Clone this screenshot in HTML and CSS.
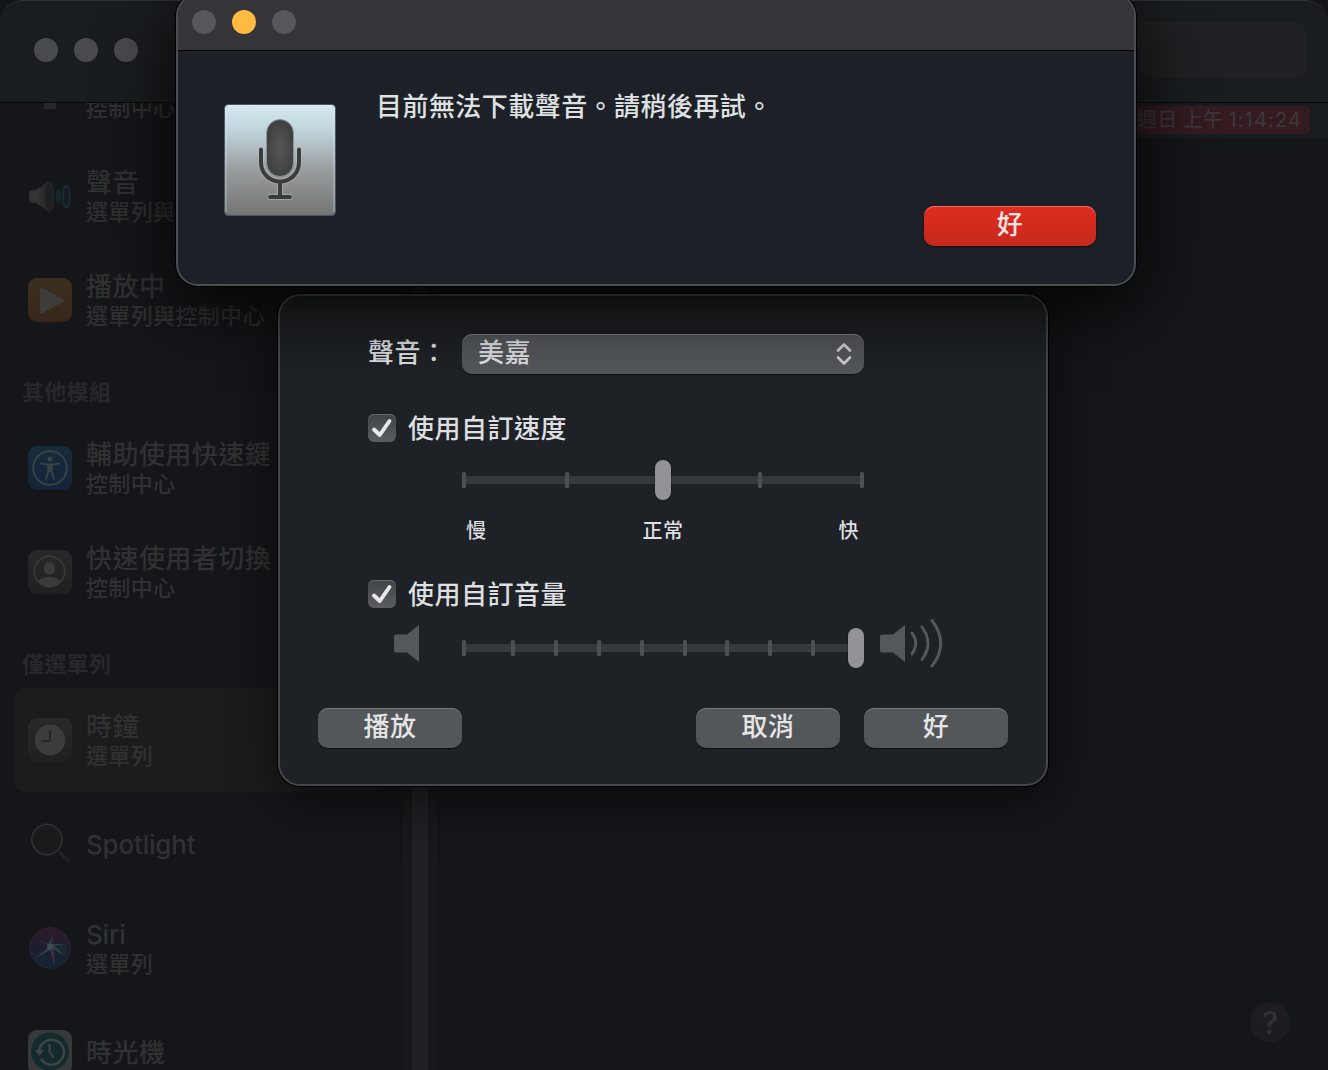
FILE: index.html
```html
<!DOCTYPE html>
<html lang="zh-Hant">
<head>
<meta charset="utf-8">
<title>系統偏好設定</title>
<link rel="stylesheet" href="styles.css">
</head>
<body>
<div class="desktop">
  <div class="prefs">
    <header class="toolbar">
      <div class="lights"><i></i><i></i><i></i></div>
      <div class="search"></div>
    </header>
    <div class="panes">
      <nav class="sidebar">
        <div class="item">
          <svg class="icon" viewBox="0 0 44 44"><rect x="16" y="31" width="12" height="8" fill="#27282a"/></svg>
          <div class="label"><span class="name">&nbsp;</span><span class="sub">控制中心</span></div>
        </div>
        <div class="item">
          <svg class="icon" viewBox="0 0 44 44">
            <defs><linearGradient id="cone" x1="0" x2="1"><stop offset="0" stop-color="#333435"/><stop offset=".7" stop-color="#292a2b"/><stop offset="1" stop-color="#1d1e1f"/></linearGradient></defs>
            <rect x="1" y="16" width="9" height="13" rx="4" fill="#323334"/>
            <path d="M8 15.500Q14 13 20 7.500v30Q14 32 8 29.500z" fill="url(#cone)"/>
            <ellipse cx="21" cy="22.500" rx="4.500" ry="15" fill="#1e1f20" stroke="#2a2b2c"/>
            <ellipse cx="30.500" cy="22.500" rx="2.300" ry="7" fill="#152428" stroke="#182c31"/>
            <ellipse cx="38.300" cy="22.500" rx="3.300" ry="11" fill="#121a1d" stroke="#182c31" stroke-width="2"/>
          </svg>
          <div class="label"><span class="name">聲音</span><span class="sub">選單列與控制中心</span></div>
        </div>
        <div class="item">
          <svg class="icon" viewBox="0 0 44 44">
            <defs><linearGradient id="amber" x2="0" y2="1"><stop offset="0" stop-color="#3b301c"/><stop offset="1" stop-color="#38261c"/></linearGradient></defs>
            <rect width="44" height="44" rx="9" fill="url(#amber)"/>
            <path d="M13.500 11 34.500 22.500 13.500 34z" fill="#3e3c39" stroke="#3e3c39" stroke-width="3" stroke-linejoin="round"/>
          </svg>
          <div class="label"><span class="name">播放中</span><span class="sub">選單列與控制中心</span></div>
        </div>
        <h2 class="group">其他模組</h2>
        <div class="item">
          <svg class="icon" viewBox="0 0 44 44">
            <defs><linearGradient id="azure" x2="0" y2="1"><stop offset="0" stop-color="#162b3c"/><stop offset="1" stop-color="#15243a"/></linearGradient></defs>
            <rect width="44" height="44" rx="9" fill="url(#azure)"/>
            <circle cx="22" cy="22" r="16.800" fill="none" stroke="#3b4145" stroke-width="2"/>
            <circle cx="22" cy="13" r="2.500" fill="#3b4145"/>
            <path d="M13 17.500 19.500 18.500H24.500L31 17.500M20.500 18.500V25L18 33M23.500 18.500V25L26 33" fill="none" stroke="#3b4145" stroke-width="2" stroke-linecap="round" stroke-linejoin="round"/>
            <path d="M19.500 18h5v8h-5z" fill="#3b4145"/>
          </svg>
          <div class="label"><span class="name">輔助使用快速鍵</span><span class="sub">控制中心</span></div>
        </div>
        <div class="item">
          <svg class="icon" viewBox="0 0 44 44">
            <defs><linearGradient id="slate" x2="0" y2="1"><stop offset="0" stop-color="#28292b"/><stop offset="1" stop-color="#1f2022"/></linearGradient>
            <clipPath id="disc"><circle cx="21.500" cy="21.500" r="15"/></clipPath></defs>
            <rect width="44" height="44" rx="9" fill="url(#slate)"/>
            <circle cx="21.500" cy="21.500" r="15.200" fill="none" stroke="#3a3b3d" stroke-width="1.500"/>
            <g clip-path="url(#disc)" fill="#3a3b3d"><ellipse cx="21.500" cy="18.500" rx="5.600" ry="6.200"/><ellipse cx="21.500" cy="34" rx="12" ry="7.300"/></g>
          </svg>
          <div class="label"><span class="name">快速使用者切換</span><span class="sub">控制中心</span></div>
        </div>
        <h2 class="group">僅選單列</h2>
        <div class="item selected">
          <svg class="icon" viewBox="0 0 44 44">
            <rect width="44" height="44" rx="9" fill="url(#slate)"/>
            <circle cx="22" cy="22" r="15.200" fill="#3b3c3e"/>
            <path d="M13 23h9V12" fill="none" stroke="#252628" stroke-width="2"/>
          </svg>
          <div class="label"><span class="name">時鐘</span><span class="sub">選單列</span></div>
        </div>
        <div class="item">
          <svg class="icon" viewBox="0 0 44 44">
            <path d="M31 30 41 39.500" stroke="#222325" stroke-width="2.500"/>
            <circle cx="19" cy="17.500" r="15.200" fill="#1b1c1f" stroke="#2f3032" stroke-width="1.500"/>
            <circle cx="19" cy="18.500" r="12.500" fill="#18191b"/>
          </svg>
          <div class="label"><span class="name latin">Spotlight</span></div>
        </div>
        <div class="item">
          <svg class="icon" viewBox="0 0 44 44">
            <defs><linearGradient id="orb" x1=".5" x2=".4" y2="1"><stop offset="0" stop-color="#321929"/><stop offset=".45" stop-color="#1f1c2e"/><stop offset="1" stop-color="#142536"/></linearGradient></defs>
            <circle cx="22" cy="22" r="20.300" fill="url(#orb)" stroke="#24282e"/>
            <path d="M22 20Q32 13 39 20 40 26 34 31z" fill="#17292c"/>
            <path d="M22 20 6 33 22 24 27 40 25 23 38 30 26 20 39 18 24 18 25 10 20 18 11 14z" fill="#2b4247"/>
            <path d="M22 23 27 40 25 23z" fill="#472b42"/>
            <circle cx="22" cy="20.500" r="3" fill="#434b50"/>
          </svg>
          <div class="label"><span class="name latin">Siri</span><span class="sub">選單列</span></div>
        </div>
        <div class="item">
          <svg class="icon" viewBox="0 0 44 44">
            <rect width="44" height="44" rx="9" fill="#37393a"/>
            <circle cx="22" cy="21.500" r="19" fill="#152b2b"/>
            <path d="M11 21a12.500 12.500 0 1 1 2 8" fill="none" stroke="#404547" stroke-width="2.300"/>
            <path d="M7 20h9l-4.500 6z" fill="#404547"/>
            <path d="M21.500 14v8l4.500 6" fill="none" stroke="#404547" stroke-width="2"/>
          </svg>
          <div class="label"><span class="name">時光機</span></div>
        </div>
      </nav>
      <div class="scroller"><div class="thumb"></div></div>
      <main class="content">
        <div class="preview"><div class="clock">週日 上午 <span class="time">1:14:24</span></div></div>
        <div class="help">?</div>
      </main>
    </div>
  </div>

  <section class="sheet">
    <div class="row voice">
      <span class="caption">聲音：</span>
      <div class="select"><span>美嘉</span>
        <svg width="16" height="24" viewBox="0 0 16 24" fill="none" stroke="#cfcfd0" stroke-width="2.700" stroke-linecap="round" stroke-linejoin="round"><path d="M2 8.500 8 2.500 14 8.500M2 15.500 8 21.500 14 15.500"/></svg>
      </div>
    </div>
    <div class="row check rate"><span class="box"><svg width="28" height="28" viewBox="0 0 28 28"><path d="M6 15.500 11.800 21 21.500 7" fill="none" stroke="#e9e9ea" stroke-width="3.900" stroke-linecap="round" stroke-linejoin="round"/></svg></span><span class="text">使用自訂速度</span></div>
    <svg class="slider" width="402" height="44" viewBox="0 0 402 44">
      <path d="M2 22H400" stroke="#36393c" stroke-width="8"/>
      <g fill="#4c5053"><rect y="14" width="4" height="16" rx="1.500"/><rect x="103" y="14" width="4" height="16" rx="1.500"/><rect x="296" y="14" width="4" height="16" rx="1.500"/><rect x="398" y="14" width="4" height="16" rx="1.500"/></g>
      <rect class="knob" x="193" y="2" width="16" height="40" rx="8"/>
    </svg>
    <div class="marks"><span>慢</span><span>正常</span><span>快</span></div>
    <div class="row check"><span class="box"><svg width="28" height="28" viewBox="0 0 28 28"><path d="M6 15.500 11.800 21 21.500 7" fill="none" stroke="#e9e9ea" stroke-width="3.900" stroke-linecap="round" stroke-linejoin="round"/></svg></span><span class="text">使用自訂音量</span></div>
    <div class="volume">
      <svg width="68" height="52" viewBox="0 0 68 52"><path d="M2 16.500H13L25 7V44L13 34.500H2q-2 0-2-2V18.500q0-2 2-2z" fill="#55585b"/></svg>
      <svg width="402" height="52" viewBox="0 0 402 52">
        <path d="M2 30H394" stroke="#36393c" stroke-width="8"/>
        <g fill="#4c5053"><rect y="22" width="4" height="16" rx="1.500"/><rect x="49" y="22" width="4" height="16" rx="1.500"/><rect x="92" y="22" width="4" height="16" rx="1.500"/><rect x="135" y="22" width="4" height="16" rx="1.500"/><rect x="178" y="22" width="4" height="16" rx="1.500"/><rect x="221" y="22" width="4" height="16" rx="1.500"/><rect x="263" y="22" width="4" height="16" rx="1.500"/><rect x="306" y="22" width="4" height="16" rx="1.500"/><rect x="349" y="22" width="4" height="16" rx="1.500"/></g>
        <rect class="knob" x="386" y="10" width="16" height="40" rx="8"/>
      </svg>
      <svg class="loud" width="66" height="52" viewBox="0 0 66 52"><path d="M2 16.500H13L25 7V44L13 34.500H2q-2 0-2-2V18.500q0-2 2-2z" fill="#55585b"/><path d="M32 15Q39.500 25.500 32 36M42 9Q54 25.500 42 41.500M52 2.500Q69.500 25.500 52 48" fill="none" stroke="#55585b" stroke-width="2.900" stroke-linecap="round"/></svg>
    </div>
    <div class="actions"><button class="btn play">播放</button><button class="btn">取消</button><button class="btn">好</button></div>
  </section>

  <section class="alert">
    <header class="titlebar"><i></i><i class="min"></i><i></i></header>
    <div class="body">
      <svg class="mic" width="112" height="114" viewBox="0 0 112 114">
        <defs>
          <linearGradient id="tile" x2="0" y2="1"><stop offset="0" stop-color="#d4e9f1"/><stop offset=".25" stop-color="#c0d3da"/><stop offset=".6" stop-color="#979b9d"/><stop offset="1" stop-color="#747372"/></linearGradient>
          <radialGradient id="capsule"><stop offset="0" stop-color="#555"/><stop offset="1" stop-color="#414141"/></radialGradient>
        </defs>
        <rect x=".5" y=".5" width="111" height="111" rx="4" fill="url(#tile)" stroke="#48576a"/>
        <path d="M2 108V5q0-3 3-3h102q3 0 3 3v103" fill="none" stroke="#e4eff2" stroke-opacity=".45"/>
        <g fill="none" stroke="#b7c3c8" stroke-opacity=".5" stroke-width="6" stroke-linecap="round"><path d="M37 45.500V58C37 70 46 77.500 56 77.500S75 70 75 58V45.500M56 78V92M46 93H66"/></g>
        <rect x="42.500" y="15.500" width="27" height="57" rx="13.500" fill="url(#capsule)" stroke="#89979d"/>
        <g fill="none" stroke="#3b3b3b" stroke-width="4" stroke-linecap="round"><path d="M37 45.500V58C37 70 46 77.500 56 77.500S75 70 75 58V45.500M56 78V92M46 93H66"/></g>
      </svg>
      <p class="message">目前無法下載聲音。請稍後再試。</p>
      <button class="btn primary">好</button>
    </div>
  </section>
</div>
</body>
</html>
```
FILE: styles.css
```css
* { box-sizing: border-box; }
body {
  margin: 0;
  background: #15161a;
  font-family: Inter, "Noto Sans CJK TC", sans-serif;
  font-size: 26px;
  letter-spacing: .4px;
}
.desktop { position: relative; width: 1328px; height: 1070px; overflow: hidden; background: #141516; }

/* preferences window, dimmed in the background */
.prefs {
  display: flex; flex-direction: column;
  height: 100%;
  border-radius: 22px 22px 0 0;
  background: #15161a;
  overflow: hidden;
}
.toolbar {
  flex: none;
  display: flex; align-items: center; justify-content: space-between;
  height: 103px;
  padding: 0 22px 3px 34px;
  background: #1a1d20;
  border-bottom: 1px solid #08090a;
  border-radius: 22px 22px 0 0;
  box-shadow: inset 0 2px 0 -1px #303335;
}
.lights { display: flex; gap: 16px; }
.lights i { width: 24px; height: 24px; border-radius: 50%; background: #494b4e; }
.search { width: 320px; height: 56px; border-radius: 10px; background: #202124; }

.panes { flex: 1; display: flex; min-height: 0; }
.sidebar { width: 404px; padding: 0 22px 0 14px; overflow: hidden; color: #303133; }
.item { display: flex; align-items: center; height: 104px; padding-left: 14px; gap: 14px; border-radius: 10px; }
.item:first-child { margin-top: -63px; }
.item.selected { background: #1b1c1d; }
.icon { flex: none; width: 44px; height: 44px; }
.label { display: flex; flex-direction: column; padding-top: 2px; white-space: nowrap; }
.name { line-height: 30px; font-weight: 500; letter-spacing: .45px; }
.latin { letter-spacing: -.2px; }
.sub { line-height: 28px; font-size: 22px; font-weight: 500; letter-spacing: .35px; }
.group { height: 64px; margin: 0; padding: 16px 0 0 8px; font-size: 22px; line-height: 48px; font-weight: 700; letter-spacing: .3px; color: #27282b; }
.scroller { display: flex; justify-content: center; width: 32px; background: #17181b; border: solid #1b1c1f; border-width: 0 1px; }
.thumb { width: 16px; background: #202125; }
.content { flex: 1; display: flex; flex-direction: column; justify-content: space-between; align-items: flex-end; }
.preview { display: flex; justify-content: flex-end; align-items: center; width: 100%; height: 35px; padding: 0 18px 1px; background: #1a1d20; }
.clock {
  width: 320px; height: 28px; padding-right: 8px;
  border-radius: 5px; background: #351b20; color: #393a3c;
  font-size: 20px; line-height: 28px; letter-spacing: .3px; text-align: right;
  word-spacing: -.8px;
}
.time { letter-spacing: 1.15px; }
.help {
  width: 40px; height: 40px; margin: 0 38px 28px 0;
  border-radius: 50%; background: #1d1d21; color: #303134;
  font-size: 31px; line-height: 41px; font-weight: 500; text-align: center;
}

/* voice options sheet */
.sheet {
  position: absolute; left: 278px; top: 294px;
  display: flex; flex-direction: column;
  width: 770px; height: 492px; padding: 38px 38px 0;
  border: 2px solid #45484b; border-radius: 22px;
  background: #1e2125; color: #dedfe0;
  font-weight: 500;
  box-shadow: 0 0 0 1px #000, 0 12px 50px rgba(0, 0, 0, .62);
}
.row { display: flex; align-items: center; padding-left: 50px; }
.voice { height: 40px; }
.caption { width: 94px; line-height: 36px; padding-bottom: 2px; }
.select {
  display: flex; align-items: center; justify-content: space-between;
  width: 402px; height: 40px; padding: 0 12px 0 16px;
  border-radius: 10px; background: #54575a;
  box-shadow: inset 0 1px 0 #7c7d80, 0 1px 1px rgba(0, 0, 0, .5);
}
.select span { padding-bottom: 2px; line-height: 36px; }
.check { height: 28px; gap: 12px; line-height: 28px; }
.text { padding-top: 2px; letter-spacing: .5px; }
.rate { margin-top: 40px; }
.box { width: 28px; height: 28px; border-radius: 6px; background: linear-gradient(#414447, #5b5e61); box-shadow: inset 0 1px 0 #66696b; }
.box svg { display: block; }
.slider { margin: 16px 0 0 144px; }
.knob { fill: #929395; filter: drop-shadow(0 0 1px #111315); }
.marks { display: grid; grid-template-columns: 1fr 1fr 1fr; width: 402px; height: 30px; margin: 14px 0 34px 144px; padding: 0 4px; font-size: 20px; line-height: 30px; }
.marks span:nth-child(2) { text-align: center; }
.marks span:nth-child(3) { padding-right: 1px; text-align: right; }
.volume { display: flex; height: 52px; margin: 10px 0 0 76px; }
.loud { margin-left: 16px; }
.actions { display: flex; gap: 24px; margin-top: 38px; }
.btn {
  width: 144px; height: 40px; padding: 0 0 2px; border: 0;
  border-radius: 10px; background: #54575a; color: #e5e5e6;
  font: 500 26px/36px Inter, "Noto Sans CJK TC", sans-serif;
  letter-spacing: .4px;
  box-shadow: inset 0 1px 0 #76797b, 0 1px 1px rgba(0, 0, 0, .5);
}
.play { margin-right: auto; }

/* download failure alert */
.alert {
  position: absolute; left: 176px; top: -6px;
  width: 960px; height: 292px;
  border: 2px solid #4b4d52; border-radius: 22px;
  background: #1d2027; color: #dfe0e1;
  overflow: hidden;
  box-shadow: 0 0 0 1px #000, 0 18px 70px 4px rgba(0, 0, 0, .85);
}
.titlebar { display: flex; gap: 16px; height: 55px; padding: 14px 0 0 14px; background: #353539; border-bottom: 1px solid #050506; }
.titlebar i { width: 24px; height: 24px; border-radius: 50%; background: #58585c; }
.titlebar .min { background: #ffba42; }
.body { display: grid; grid-template-columns: 112px 1fr; column-gap: 40px; height: 233px; padding: 53px 38px 38px 46px; grid-template-rows: 1fr 40px; }
.mic { grid-row: 1 / 3; }
.message { margin: -13px 0 0; line-height: 32px; font-weight: 500; letter-spacing: .45px; }
.primary {
  width: 172px; justify-self: end;
  background: linear-gradient(#df2c20, #c5291c); color: #fbe5e3;
  box-shadow: inset 0 1px 0 #ee7168, 0 1px 2px rgba(0, 0, 0, .5);
}
```
